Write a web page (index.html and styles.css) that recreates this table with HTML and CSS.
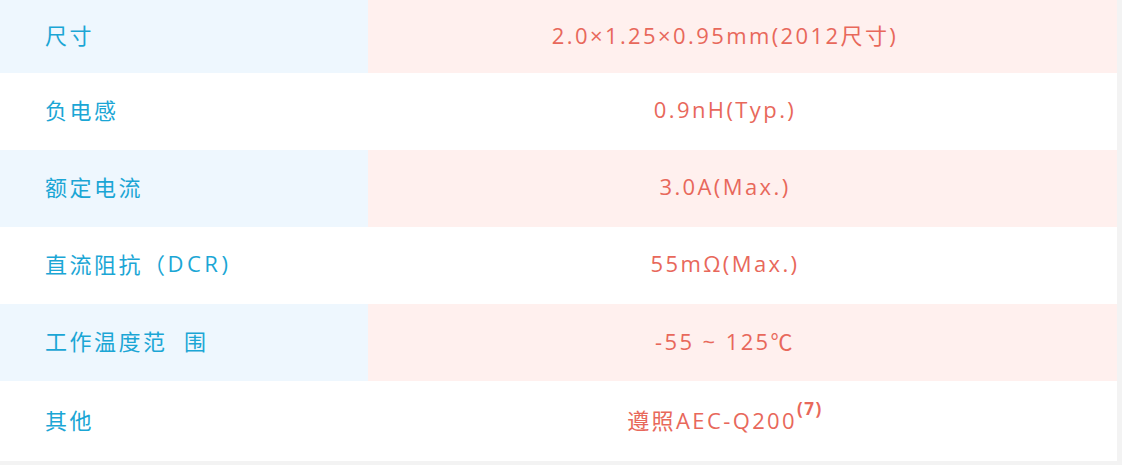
FILE: index.html
```html
<!DOCTYPE html>
<html lang="zh">
<head>
<meta charset="utf-8">
<link rel="stylesheet" href="styles.css">
</head>
<body>
<div class="spec">
  <div class="row odd r1"><div class="label">尺寸</div><div class="value">2.0×1.25×0.95mm(2012尺寸)</div></div>
  <div class="row even"><div class="label">负电感</div><div class="value">0.9nH(Typ.)</div></div>
  <div class="row odd"><div class="label">额定电流</div><div class="value">3.0A(Max.)</div></div>
  <div class="row even"><div class="label">直流阻抗（<span class="wide">DCR)</span></div><div class="value">55mΩ(Max.)</div></div>
  <div class="row odd"><div class="label">工作温度范&nbsp; 围</div><div class="value">-55 ~ 125℃</div></div>
  <div class="row even last"><div class="label">其他</div><div class="value">遵照AEC-Q200<sup class="note">(7)</sup></div></div>
</div>
</body>
</html>
```

FILE: styles.css
```css
html, body {
  margin: 0;
  padding: 0;
}
body {
  background: #f3f3f3;
  width: 1122px;
  height: 465px;
  overflow: hidden;
  font-family: "Open Sans", "Noto Sans CJK SC", sans-serif;
}
.spec {
  width: 1117px;
  display: flex;
  flex-direction: column;
}
.row {
  display: grid;
  grid-template-columns: 368px 1fr;
  height: 77px;
}
.row.r1 { height: 73px; }
.row.last { height: 80px; }
.row.odd .label { background: #eef7fe; }
.row.odd .value { background: #fff0ee; }
.row.even { background: #ffffff; }
.label {
  display: flex;
  align-items: center;
  padding-left: 45px;
  padding-bottom: 5px;
  color: #1ba6d5;
  font-size: 22px;
  letter-spacing: 2.5px;
  white-space: pre;
}
.wide {
  letter-spacing: 3.5px;
}
.value {
  display: flex;
  align-items: center;
  justify-content: center;
  padding-right: 35px;
  padding-bottom: 5px;
  color: #e8685b;
  font-size: 22px;
  letter-spacing: 2.4px;
}
.note {
  font-size: 17px;
  font-weight: 700;
  letter-spacing: 1.5px;
  position: relative;
  top: -3px;
  align-self: flex-start;
  margin-top: 19px;
}
```
